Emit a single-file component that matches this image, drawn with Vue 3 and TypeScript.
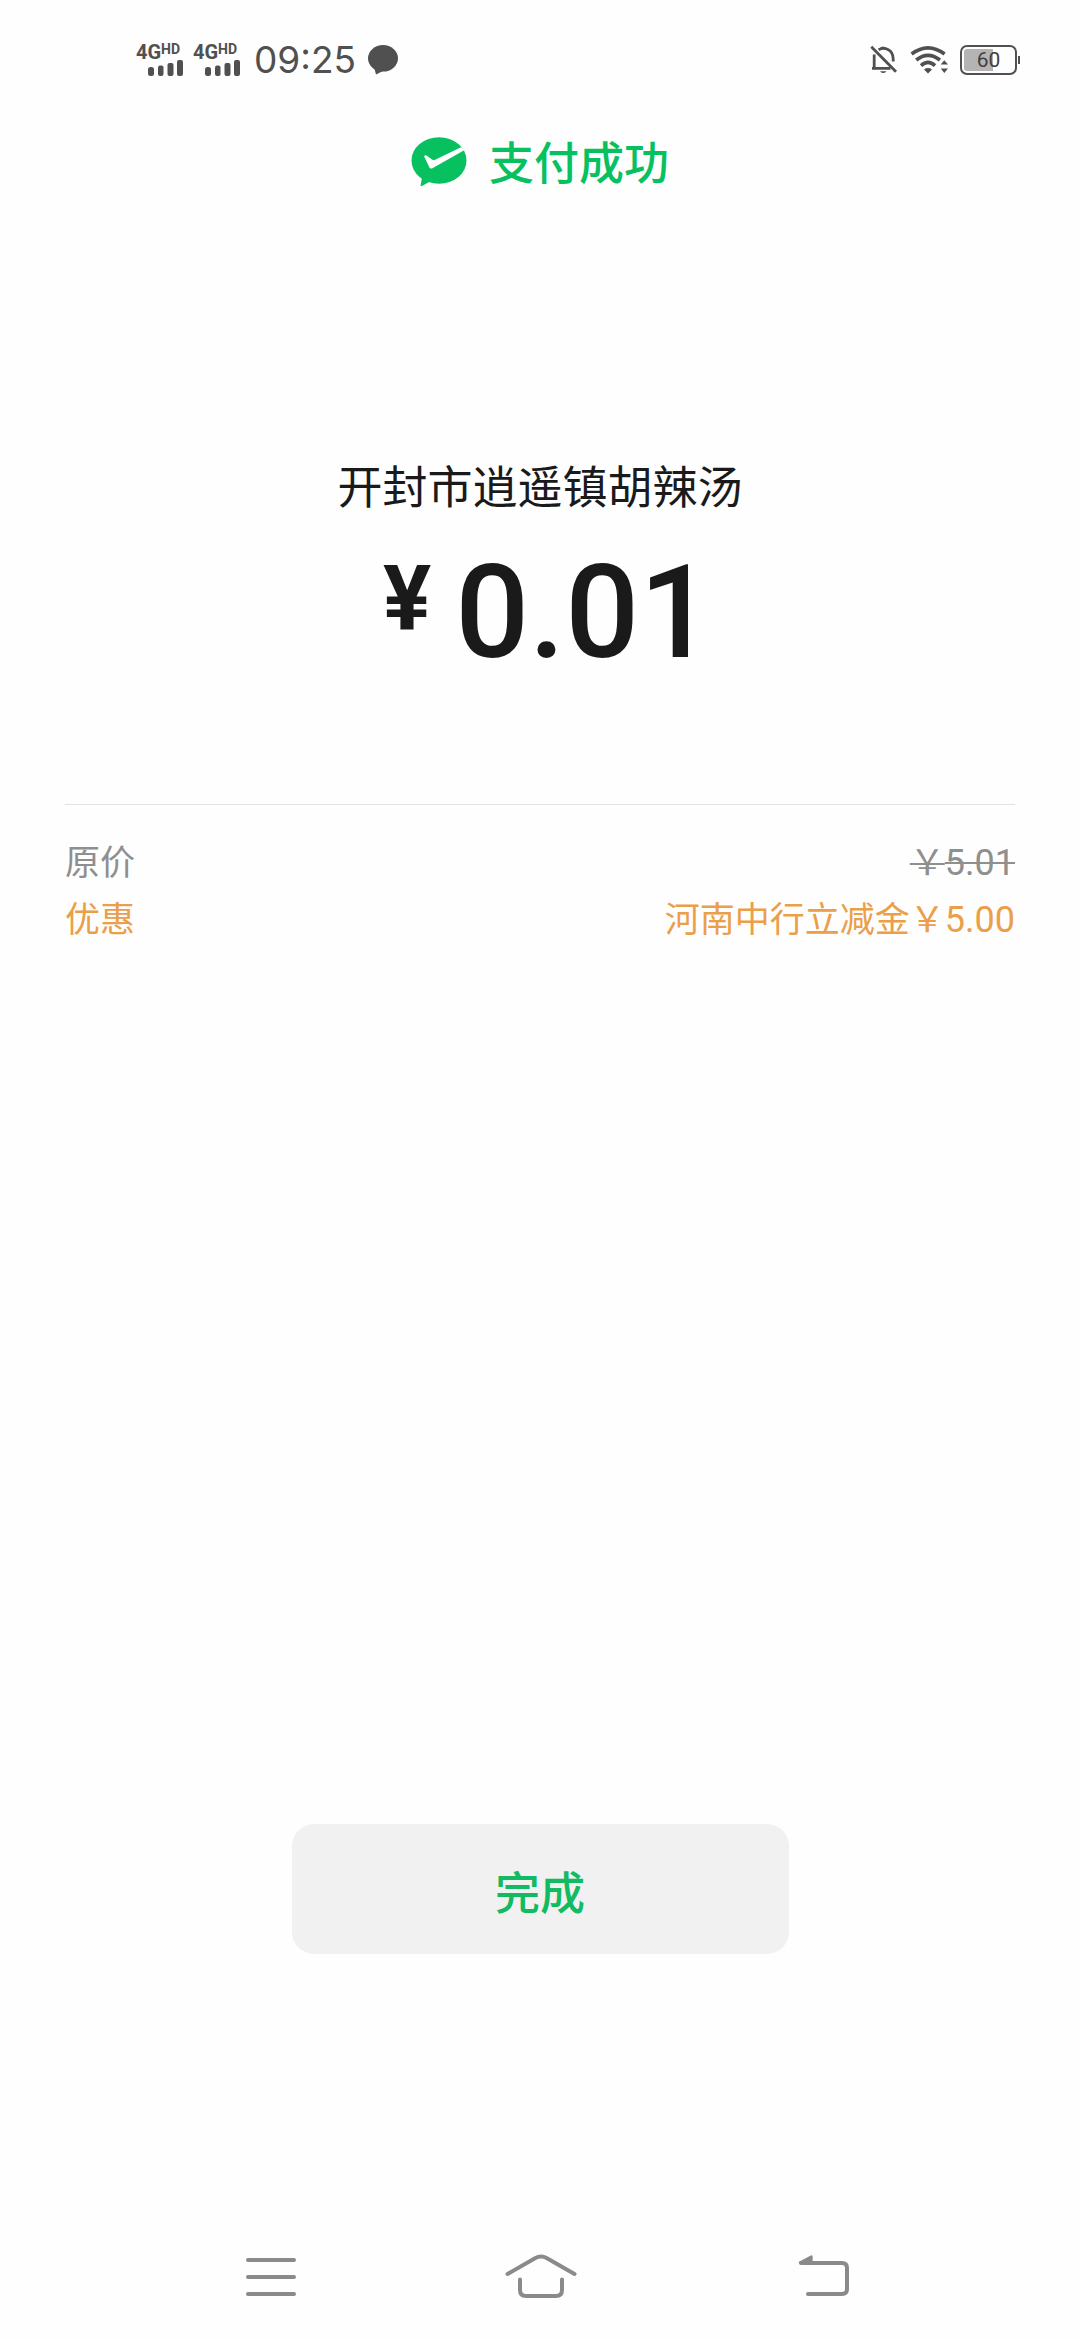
<script setup lang="ts">
interface Detail {
  label: string
  note: string
  amount: string
  kind: 'original' | 'discount'
}

const merchant = '开封市逍遥镇胡辣汤'
const paid = '0.01'
const battery = 60
const details: Detail[] = [
  { label: '原价', note: '', amount: '5.01', kind: 'original' },
  { label: '优惠', note: '河南中行立减金', amount: '5.00', kind: 'discount' },
]
</script>

<template>
  <div class="screen">
    <header class="status">
      <div class="status-side">
        <div v-for="sim in 2" :key="sim" class="signal">
          <span class="network">4G<small>HD</small></span>
          <svg class="bars" width="36" height="16" viewBox="0 0 36 16" aria-hidden="true">
            <rect x="0" y="7" width="6" height="9" rx="2.5" />
            <rect x="10" y="5.5" width="5.5" height="10.5" rx="2" />
            <rect x="19.5" y="3" width="6" height="13" rx="2" />
            <rect x="29" y="0" width="6" height="16" rx="2" />
          </svg>
        </div>
        <time class="clock">09:25</time>
        <svg class="bubble" width="30" height="30" viewBox="0 0 30 30" aria-hidden="true">
          <ellipse cx="15" cy="13.3" rx="15" ry="13.3" />
          <path d="M6 22 L8 29.5 L16 25.5 Z" />
        </svg>
      </div>
      <div class="status-side">
        <svg width="28" height="30" viewBox="0 0 28 30" fill="none" stroke="#505050" stroke-width="2.8" aria-hidden="true">
          <path d="M1.3 1.7 L26 26.7" />
          <path d="M4.2 9.5 V23.3 M2 23.3 H20.5" />
          <path d="M8.6 4.8 C14 1.6 23.2 4 23.2 14 V16.5" />
          <path d="M10.5 3.6 Q13 0.8 15.5 3.6 Z" fill="#505050" stroke-width="1.5" />
          <path d="M10 26.2 H16.5 Q13.2 30 10 26.2 Z" fill="#505050" stroke="none" />
        </svg>
        <svg class="wifi" width="40" height="30" viewBox="0 0 40 30" fill="none" stroke="#505050" stroke-width="3.6" aria-hidden="true">
          <path d="M1.6 9 Q18 -3.4 34.6 9" />
          <path d="M6.2 15 Q18 5.6 30 15" />
          <path d="M11 20.6 Q18 14.2 25 20.6" />
          <path d="M14 24.4 Q18 21.6 22 24.4 L18 28.6 Z" fill="#505050" stroke="none" />
          <path d="M30.7 19.6 H38 L34.3 15.2 Z M30.7 23.6 H38 L34.3 28 Z" fill="#505050" stroke="none" />
        </svg>
        <div class="battery">
          <div class="cell">
            <div class="charge" :style="{ width: battery + '%' }"></div>
            <span class="level">{{ battery }}</span>
          </div>
          <div class="tip"></div>
        </div>
      </div>
    </header>

    <main class="result">
      <h1 class="title">
        <svg width="56" height="50" viewBox="0 0 56 50" aria-hidden="true">
          <ellipse cx="28" cy="23.5" rx="27.5" ry="23.3" fill="#07c160" />
          <path d="M11.5 38 L9.6 48.2 Q9.8 49.6 11.4 48.8 L20 44 Z" fill="#07c160" />
          <path d="M13.2 19.4 Q13.6 17.8 15.4 18.4 L21.4 22.8 Q22.4 23.4 23.6 22.9 L50 10.2 L53.6 13 L21 31.4 Q19.2 32 18.4 30.4 Z" fill="#fefefe" />
        </svg>
        <span>支付成功</span>
      </h1>

      <p class="merchant">{{ merchant }}</p>
      <p class="amount"><span class="currency">¥</span><span>{{ paid }}</span></p>

      <dl class="details">
        <div v-for="item in details" :key="item.label" class="detail" :class="item.kind">
          <dt>{{ item.label }}</dt>
          <dd>{{ item.note }}￥<span class="figure">{{ item.amount }}</span></dd>
        </div>
      </dl>

      <button class="done" type="button">完成</button>
    </main>

    <nav class="system">
      <button type="button" aria-label="最近任务">
        <svg width="80" height="54" viewBox="0 0 80 54">
          <path d="M17 10 H63 M17 27 H63 M17 44 H63" />
        </svg>
      </button>
      <button type="button" aria-label="主屏幕">
        <svg width="80" height="54" viewBox="0 0 80 54">
          <path d="M7.5 24 L35 8.2 Q41 5 47 8.2 L74.5 24" />
          <path d="M20 29.5 V40 Q20 46 26 46 H56 Q62 46 62 40 V29.5" />
        </svg>
      </button>
      <button type="button" aria-label="返回">
        <svg width="80" height="54" viewBox="0 0 80 54">
          <path d="M32 13 H73 Q78 13 78 18 V39 Q78 44 73 44 H39" />
          <path d="M31 12.6 L42.4 6.6 V13 Z" fill="#8a8a8a" stroke-width="2.5" />
        </svg>
      </button>
    </nav>
  </div>
</template>

<style>
body {
  margin: 0;
  background: #fefefe;
}
</style>

<style scoped>
.screen {
  display: flex;
  flex-direction: column;
  min-height: 100vh;
  background: #fefefe;
  color: #1a1a1a;
  font-family: Roboto, "Noto Sans CJK SC", sans-serif;
}

.status {
  display: flex;
  justify-content: space-between;
  align-items: center;
  height: 120px;
  padding: 0 60px 0 136px;
  color: #505050;
}

.status-side {
  display: flex;
  align-items: center;
}

.signal {
  display: flex;
  flex-direction: column;
  width: 47px;
  margin-right: 10px;
}

.network {
  display: flex;
  align-items: flex-start;
  height: 16px;
  font-size: 20px;
  font-weight: 700;
  line-height: 16px;
}

.network small {
  font-size: 14px;
  line-height: 10px;
}

.bars {
  margin-left: 12px;
}

.bars,
.bubble {
  fill: #505050;
}

.clock {
  margin: 0 12px 0 4px;
  font-family: Inter, sans-serif;
  font-size: 37px;
  line-height: 40px;
}

.wifi {
  margin: 0 10px 0 12px;
}

.battery {
  display: flex;
  align-items: center;
}

.cell {
  position: relative;
  box-sizing: border-box;
  width: 57px;
  height: 30px;
  padding: 2px;
  border: 2px solid #505050;
  border-radius: 7px;
}

.charge {
  height: 100%;
  border-radius: 3px 0 0 3px;
  background: #b4b4b4;
}

.level {
  position: absolute;
  inset: 0;
  color: #404040;
  font-size: 21px;
  line-height: 26px;
  text-align: center;
}

.tip {
  width: 2px;
  height: 8px;
  margin-left: 1px;
  background: #505050;
}

.result {
  display: flex;
  flex: 1;
  flex-direction: column;
  align-items: center;
  padding: 12px 65px 0;
}

.title {
  display: flex;
  align-items: flex-start;
  gap: 22px;
  margin: 0;
  color: #07c160;
  font-size: 45px;
  font-weight: 500;
  line-height: 66px;
}

.title svg {
  margin-top: 5px;
}

.merchant {
  margin: 261px 0 0;
  font-size: 45px;
  line-height: 60px;
}

.amount {
  display: flex;
  align-items: flex-start;
  gap: 24px;
  margin: 29px 0 0;
  padding-left: 16px;
  font-size: 130px;
  font-weight: 500;
  line-height: 130px;
}

.currency {
  font-size: 90px;
  font-weight: 700;
  line-height: 104px;
}

.details {
  align-self: stretch;
  margin: 126px 0 0;
  padding-top: 30px;
  border-top: 1px solid #e2e2e2;
  font-size: 35px;
  line-height: 57px;
}

.detail {
  display: flex;
  justify-content: space-between;
}

.detail dd {
  margin: 0;
}

.figure {
  font-size: 36px;
}

.original {
  color: #8f8f8f;
}

.original dd {
  text-decoration: line-through;
  text-decoration-thickness: 2px;
}

.discount {
  color: #eb9f48;
}

.done {
  width: 497px;
  max-width: 100%;
  height: 130px;
  margin: auto 0 240px;
  padding: 2px 0 0;
  border: 0;
  border-radius: 22px;
  background: #f1f1f1;
  color: #12ba62;
  font: inherit;
  font-size: 45px;
  font-weight: 500;
}

.system {
  display: flex;
  justify-content: space-around;
  padding: 56px 136px 36px;
}

.system button {
  display: flex;
  padding: 0;
  border: 0;
  background: none;
}

.system svg {
  fill: none;
  stroke: #8a8a8a;
  stroke-width: 4;
  stroke-linecap: round;
  stroke-linejoin: round;
}
</style>
